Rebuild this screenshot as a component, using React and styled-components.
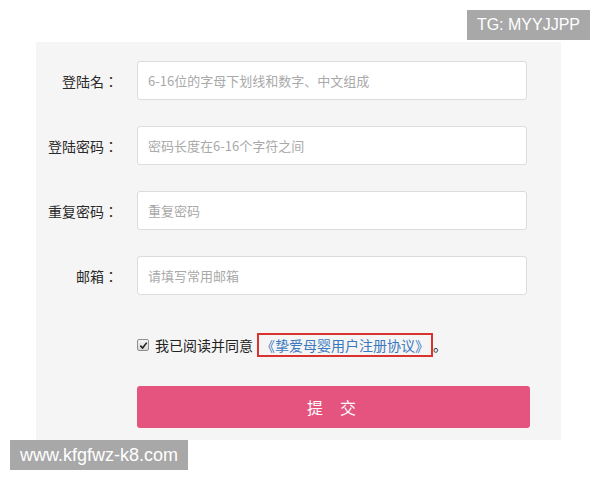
import React from "react";
import styled, { createGlobalStyle } from "styled-components";

const Global = createGlobalStyle`
  html, body {
    margin: 0;
    padding: 0;
    background: #fff;
    font-family: "Microsoft YaHei", "Noto Sans CJK SC", sans-serif;
  }
`;

const Page = styled.div`
  position: relative;
  width: 600px;
  height: 480px;
  overflow: hidden;
  padding-top: 42px;
  box-sizing: border-box;
`;

const Panel = styled.div`
  margin-left: 36px;
  width: 525px;
  height: 398px;
  box-sizing: border-box;
  background: #f5f5f5;
  padding-top: 19px;
  display: grid;
  grid-template-columns: 82px 390px;
  column-gap: 19px;
  align-content: start;
`;

const Label = styled.label`
  display: flex;
  align-items: center;
  justify-content: flex-end;
  font-family: "Noto Sans CJK TC", "Noto Sans CJK SC", sans-serif;
  font-size: 14px;
  color: #2a2a2a;
  height: 39px;
  margin-bottom: ${(p) => p.$gap || 0}px;
  white-space: nowrap;
`;

const Input = styled.input`
  height: 39px;
  box-sizing: border-box;
  border: 1px solid #dcdcdc;
  border-radius: 3px;
  background: #fff;
  padding: 0 10px;
  font-size: 13px;
  font-family: inherit;
  color: #333;
  margin-bottom: ${(p) => p.$gap || 0}px;
  outline: none;
  &::placeholder {
    color: #a9a9a9;
  }
`;

const Agree = styled.div`
  grid-column: 2;
  margin-top: 38px;
  height: 24px;
  display: flex;
  align-items: center;
  font-size: 14px;
  color: #222;
`;

const Check = styled.span`
  width: 12px;
  height: 12px;
  box-sizing: border-box;
  border: 1px solid #8f8f8f;
  border-radius: 2px;
  background: linear-gradient(#f4f4f4, #d8d8d8);
  display: inline-flex;
  align-items: center;
  justify-content: center;
  margin-right: 6px;
`;

const Protocol = styled.a`
  color: #3a78c0;
  text-decoration: none;
  border: 2px solid #d8332e;
  padding: 1px 2px;
  margin-left: 4px;
  line-height: 18px;
`;

const Submit = styled.button`
  grid-column: 2;
  margin-top: 29px;
  width: 393px;
  height: 42px;
  border: none;
  border-radius: 3px;
  background: #e5537f;
  color: #fff;
  font-family: inherit;
  font-size: 16px;
  letter-spacing: 17px;
  padding-left: 19px;
  cursor: pointer;
`;

const Badge = styled.div`
  position: absolute;
  height: 30px;
  padding: 0 10px;
  display: flex;
  align-items: center;
  background: #a8a8a8;
  color: #fff;
  font-family: "Liberation Sans", Arial, sans-serif;
  font-size: ${(p) => p.$size}px;
  white-space: nowrap;
`;

const TopBadge = styled(Badge)`
  top: 10px;
  right: 10px;
`;

const BottomBadge = styled(Badge)`
  top: 440px;
  left: 10px;
`;

const fields = [
  { label: "登陆名：", ph: "6-16位的字母下划线和数字、中文组成" },
  { label: "登陆密码：", ph: "密码长度在6-16个字符之间", type: "password" },
  { label: "重复密码：", ph: "重复密码", type: "password" },
  { label: "邮箱：", ph: "请填写常用邮箱" },
];

export default function App() {
  return (
    <Page>
      <Global />
      <Panel>
        {fields.map((f, i) => {
          const gap = i < fields.length - 1 ? 26 : 0;
          return (
            <React.Fragment key={f.label}>
              <Label $gap={gap}>{f.label}</Label>
              <Input $gap={gap} type={f.type || "text"} placeholder={f.ph} />
            </React.Fragment>
          );
        })}
        <Agree>
          <Check>
            <svg width="9" height="9" viewBox="0 0 10 10">
              <path d="M1.5 5.2 L4 7.8 L8.6 1.8" fill="none" stroke="#222" strokeWidth="1.8" />
            </svg>
          </Check>
          我已阅读并同意
          <Protocol href="#">《挚爱母婴用户注册协议》</Protocol>。
        </Agree>
        <Submit>提交</Submit>
      </Panel>
      <TopBadge $size={16}>TG: MYYJJPP</TopBadge>
      <BottomBadge $size={18}>www.kfgfwz-k8.com</BottomBadge>
    </Page>
  );
}
